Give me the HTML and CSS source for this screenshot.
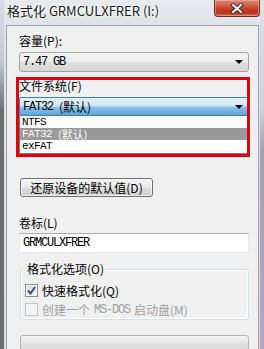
FILE: index.html
```html
<!DOCTYPE html>
<html lang="zh-CN">
  <head>
    <meta charset="UTF-8" />
    <title>格式化 GRMCULXFRER (I:)</title>
    <link rel="stylesheet" href="styles.css">
  </head>
  <body>
    <div class="window">
      <div class="titlebar">
        <span class="title">格式化 GRMCULXFRER (I:)</span>
        <span class="close">
          <svg width="14" height="11" viewBox="0 0 14 11">
            <path d="M3 2 L11 9 M11 2 L3 9" stroke="#4a2a24" stroke-width="4" stroke-linecap="square" fill="none" />
            <path d="M3 2 L11 9 M11 2 L3 9" stroke="#ffffff" stroke-width="2" stroke-linecap="square" fill="none" />
          </svg>
        </span>
      </div>
      <div class="client">
        <div class="label">容量(P):</div>
        <div class="combo">
          <span class="mono">7.47 GB</span>
          <span class="arrow"></span>
        </div>

        <div class="label label-fs">文件系统(F)</div>
        <div class="combo combo-open">
          <span class="mono">FAT32 <span class="cjk">(默认)</span></span>
          <span class="arrow"></span>
        </div>
        <ul class="droplist">
          <li class="mono">NTFS</li>
          <li class="mono selected">FAT32 <span class="cjk">(默认)</span></li>
          <li class="mono">exFAT</li>
        </ul>

        <button class="btn">还原设备的默认值(D)</button>

        <div class="label label-vol">卷标(L)</div>
        <div class="textbox mono">GRMCULXFRER</div>

        <fieldset class="group">
          <legend>格式化选项(O)</legend>
          <div class="check">
            <span class="box">
              <svg width="9" height="9" viewBox="0 0 9 9">
                <path d="M1 4.5 L3.5 7.5 L8 1" stroke="#2f4f95" stroke-width="2" fill="none" />
              </svg>
            </span>
            快速格式化(Q)
          </div>
          <div class="check disabled">
            <span class="box"></span>
            创建一个 <span class="mono">MS-DOS</span> 启动盘(M)
          </div>
        </fieldset>

        <div class="progress"></div>

        <div class="highlight"></div>
      </div>
    </div>
  </body>
</html>
```

FILE: styles.css
```css
* {
  box-sizing: border-box;
}
html,
body {
  margin: 0;
  padding: 0;
}
body {
  font-family: "Noto Sans CJK SC", "Liberation Sans", sans-serif;
  font-size: 12px;
  color: #000;
  background: #dfe4e9;
}
.window {
  width: 264px;
  height: 349px;
  overflow: hidden;
  background:
    linear-gradient(to bottom, #d8dde3 0, #c6cacf 60px, #6f6f72 110px, #6d6d70 100%) left top / 4px 100% no-repeat,
    linear-gradient(to bottom, #dde2e7 0, #cfd2d7 110px, #a49eb2 150px, #b7a4c7 100%) right top / 4px 100% no-repeat,
    linear-gradient(to bottom, #e7ebef 0, #dfe4e9 25px, #dbdfe4 100%);
}

/* title bar */
.titlebar {
  height: 25px;
  display: flex;
  justify-content: space-between;
  align-items: flex-start;
  padding-left: 7px;
  padding-right: 4px;
}
.title {
  font-size: 13px;
  line-height: 16px;
  padding-top: 3px;
  color: #1b1b1b;
  text-shadow: 0 0 4px #fff, 0 0 2px #fff;
}
.close {
  width: 46px;
  height: 17px;
  display: flex;
  align-items: center;
  justify-content: center;
  border: 1px solid #7a2c22;
  border-top: 0;
  border-radius: 0 0 4px 4px;
  background: linear-gradient(to bottom, #d88c7a 0, #cf5f48 35%, #c43f28 55%, #b8341f 80%, #d8694c 100%);
  box-shadow: inset 0 0 0 1px rgba(255, 200, 180, 0.45);
}
.close svg {
  display: block;
}

/* client area */
.client {
  position: relative;
  width: 253px;
  height: 326px;
  margin-left: 6px;
  border: 1px solid #9aa3ad;
  background: #f0f0f0;
  padding: 8px 9px 0 12px;
}
.label {
  height: 14px;
  line-height: 14px;
}
.mono {
  font-family: "Liberation Mono", "Noto Sans CJK SC", monospace;
  letter-spacing: -1.2px;
}
.cjk {
  font-family: "Noto Sans CJK SC", sans-serif;
  letter-spacing: 0;
  vertical-align: top;
}
.combo {
  margin-top: 4px;
  height: 20px;
  display: flex;
  align-items: center;
  justify-content: space-between;
  padding: 0 5px 0 3px;
  border: 1px solid #a3a3a3;
  border-radius: 3px;
  background: linear-gradient(to bottom, #f4f4f4 0, #ececec 50%, #dfdfdf 51%, #d7d7d7 100%);
}
.combo .mono {
  line-height: 14px;
}
.arrow {
  width: 0;
  height: 0;
  border-left: 4px solid transparent;
  border-right: 4px solid transparent;
  border-top: 4px solid #000;
}
.label-fs {
  margin-top: 7px;
}
.combo-open {
  height: 19px;
  border-color: #3c7fb1;
  border-radius: 2px 2px 0 0;
  background: linear-gradient(to bottom, #e4f2fb 0, #cfe6f6 45%, #8cc3ea 55%, #5ea5d8 100%);
}
.droplist {
  list-style: none;
  margin: 0;
  padding: 0 0 1px 0;
  height: 38px;
  background: #fff;
  border: 1px solid #7a7a7a;
  border-top: 0;
  font-size: 11px;
}
.droplist li {
  height: 12px;
  line-height: 12px;
  padding-left: 2px;
  letter-spacing: -0.6px;
  white-space: nowrap;
}
.droplist .cjk {
  font-size: 11px;
  line-height: 12px;
}
.droplist li.selected {
  background: #999;
  color: #fff;
}

/* button */
.btn {
  display: block;
  margin: 24px 0 0 1px;
  width: 133px;
  height: 19px;
  padding: 0;
  font-family: inherit;
  font-size: 12px;
  line-height: 17px;
  color: #000;
  border: 1px solid #707070;
  border-radius: 3px;
  background: linear-gradient(to bottom, #f2f2f2 0, #ebebeb 50%, #dddddd 51%, #cfcfcf 100%);
  box-shadow: inset 0 0 0 1px rgba(255, 255, 255, 0.7);
}
.label-vol {
  margin-top: 19px;
}
.textbox {
  margin-top: 3px;
  height: 20px;
  line-height: 18px;
  padding-left: 3px;
  background: #fff;
  border: 1px solid #e3e9ef;
  border-top-color: #abadb3;
}

/* group box */
.group {
  margin: 9px 0 0 1px;
  padding: 5px 4px 4px 4px;
  height: 58px;
  border: 1px solid #d5dfe5;
  border-radius: 3px;
  box-shadow: inset 0 0 0 1px #fff;
}
.group legend {
  padding: 0 2px;
  line-height: 14px;
}
.check {
  display: flex;
  align-items: center;
  gap: 4px;
  height: 19px;
}
.box {
  width: 13px;
  height: 13px;
  display: flex;
  align-items: center;
  justify-content: center;
  border: 1px solid #8e8f8f;
  background: linear-gradient(135deg, #dcdcdc 0, #f6f6f6 100%);
  box-shadow: inset 0 0 0 1px #f4f4f4;
}
.box svg {
  display: block;
}
.check.disabled {
  color: #a0a0a0;
}
.check.disabled .box {
  border-color: #c4c4c4;
  background: #f4f4f4;
  box-shadow: none;
}

.progress {
  margin: 15px 0 0 1px;
  height: 16px;
  border: 1px solid #b2b2b2;
  border-radius: 3px;
  background: linear-gradient(to bottom, #f4f4f4 0, #e4e4e4 50%, #d6d6d6 100%);
}

/* annotation over the file system field */
.highlight {
  position: absolute;
  left: 9px;
  top: 51px;
  width: 234px;
  height: 80px;
  border: 3px solid #e3000f;
  pointer-events: none;
}
```
